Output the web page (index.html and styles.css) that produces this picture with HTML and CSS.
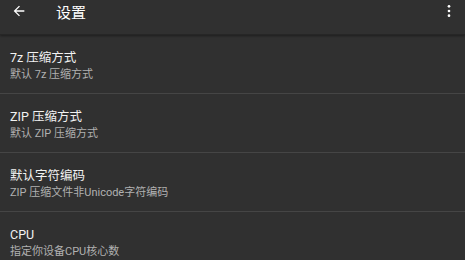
FILE: index.html
```html
<!DOCTYPE html>
<html lang="zh">
<head>
    <meta charset="UTF-8">
    <title>设置</title>
    <link rel="stylesheet" href="styles.css">
</head>
<body>
    <div id="toolbar">
        <svg class="icon" width="16" height="16" viewBox="0 0 24 24"><path d="M20 11H7.83l5.59-5.59L12 4l-8 8 8 8 1.41-1.41L7.83 13H20v-2z" fill="#fff"/></svg>
        <div id="title">设置</div>
        <svg class="more" width="16" height="16" viewBox="0 0 24 24"><circle cx="12" cy="5" r="2" fill="#fff"/><circle cx="12" cy="12" r="2" fill="#fff"/><circle cx="12" cy="19" r="2" fill="#fff"/></svg>
    </div>
    <div id="list">
        <div class="item">
            <div class="name">7z 压缩方式</div>
            <div class="desc">默认 7z 压缩方式</div>
        </div>
        <div class="item">
            <div class="name">ZIP 压缩方式</div>
            <div class="desc">默认 ZIP 压缩方式</div>
        </div>
        <div class="item">
            <div class="name">默认字符编码</div>
            <div class="desc">ZIP 压缩文件非Unicode字符编码</div>
        </div>
        <div class="item">
            <div class="name">CPU</div>
            <div class="desc">指定你设备CPU核心数</div>
        </div>
    </div>
</body>
</html>
```
FILE: styles.css
```css
body{
    margin: 0;
    background-color: #303030;
    font-family: Roboto, "Noto Sans CJK SC", sans-serif;
    color: #fff;
    overflow: hidden;
}
#toolbar{
    display: flex;
    align-items: center;
    padding: 0 12px 12px 11px;
    box-sizing: border-box;
    height: 35px;
    background-color: #303030;
    border-bottom: 1px solid #262626;
    box-shadow: 0 1px 2px rgba(0,0,0,0.4);
}
#title{
    font-size: 15px;
    margin-left: 29px;
    flex: 1;
}
.more{
    margin-right: -4px;
}
.item{
    height: 59px;
    padding: 14px 10px 0 10px;
    box-sizing: border-box;
    border-bottom: 1px solid #454545;
}
.name{
    font-size: 12.5px;
    line-height: 17px;
    color: #f2f2f2;
}
.desc{
    margin-top: 1px;
    font-size: 11px;
    line-height: 15px;
    color: #b0b0b0;
}
```
